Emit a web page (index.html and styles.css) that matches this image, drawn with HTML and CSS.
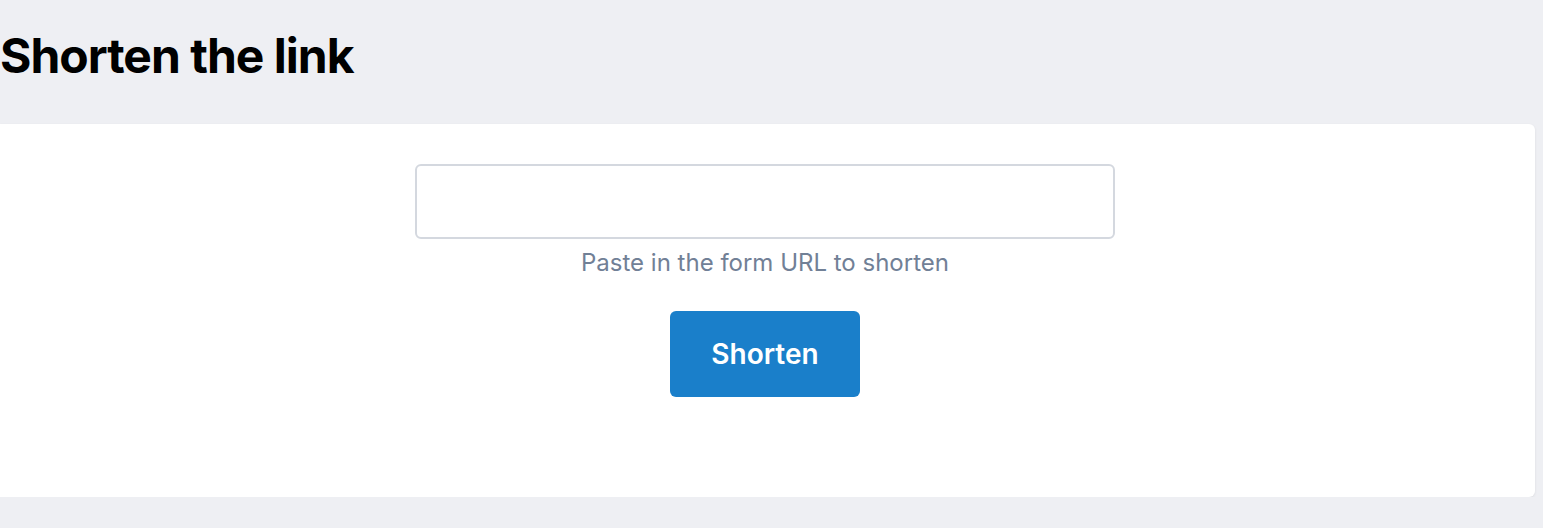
FILE: index.html
```html
<!DOCTYPE html>
<html lang="en">
<head>
<meta charset="utf-8">
<title>Shorten the link</title>
<link rel="stylesheet" href="styles.css">
</head>
<body>
<main class="page">
  <h1 class="title">Shorten the link</h1>
  <section class="card">
    <form class="form">
      <input class="url-input" type="text" aria-label="URL">
      <p class="hint">Paste in the form URL to shorten</p>
      <button class="btn" type="button">Shorten</button>
    </form>
  </section>
</main>
</body>
</html>
```

FILE: styles.css
```css
html, body {
  margin: 0;
  padding: 0;
}
body {
  background: #eeeff3;
  font-family: Inter, "Noto Sans", sans-serif;
  color: #000;
}
.page {
  padding-top: 28px;
}
.title {
  margin: 0;
  font-size: 48px;
  line-height: 56px;
  font-weight: 700;
  letter-spacing: -1px;
  color: #000;
}
.card {
  margin-top: 40px;
  width: 1535px;
  box-sizing: border-box;
  background: #fff;
  border-radius: 0 6px 6px 0;
  box-shadow: 0 1px 3px rgba(0,0,0,0.08);
  padding: 40px 5px 100px 0;
}
.form {
  display: flex;
  flex-direction: column;
  align-items: center;
}
.url-input {
  width: 700px;
  height: 75px;
  box-sizing: border-box;
  border: 2px solid #d4d8df;
  border-radius: 6px;
  background: #fff;
  font: inherit;
  outline: none;
}
.hint {
  margin: 9px 0 0;
  font-size: 24px;
  line-height: 30px;
  color: #718096;
}
.btn {
  margin-top: 33px;
  width: 190px;
  height: 86px;
  border: none;
  border-radius: 6px;
  background: #1a7fca;
  color: #fff;
  font-family: Inter, "Noto Sans", sans-serif;
  font-size: 28px;
  font-weight: 600;
  cursor: pointer;
}
```
